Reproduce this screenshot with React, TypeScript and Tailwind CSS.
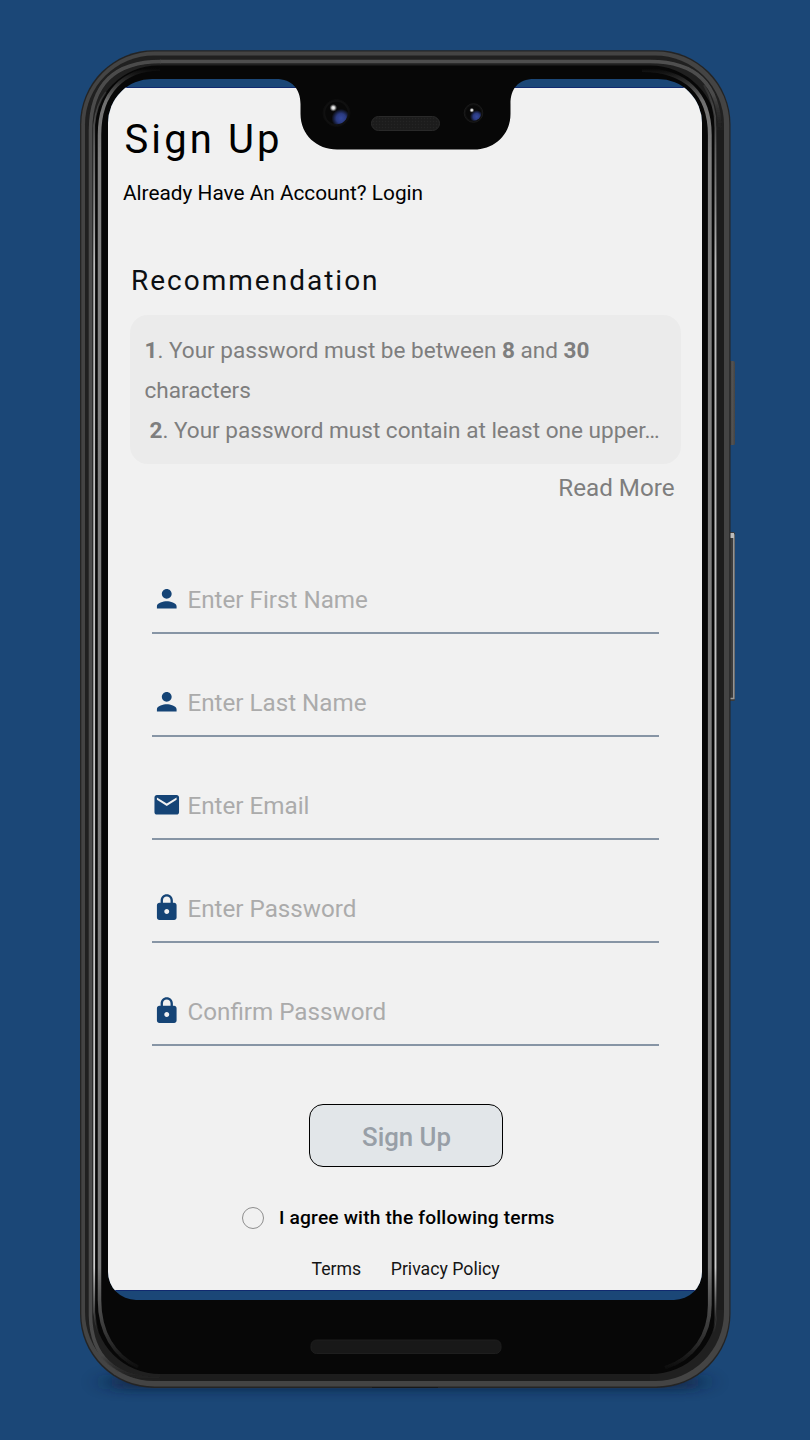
import type { ReactNode } from "react";
import { MdEmail, MdLock, MdPerson } from "react-icons/md";

const fields: { label: string; icon: ReactNode }[] = [
  { label: "Enter First Name", icon: <MdPerson size={29.5} /> },
  { label: "Enter Last Name", icon: <MdPerson size={29.5} /> },
  { label: "Enter Email", icon: <MdEmail size={29.5} /> },
  { label: "Enter Password", icon: <MdLock size={29.5} /> },
  { label: "Confirm Password", icon: <MdLock size={29.5} /> },
];

function PhoneBody() {
  return (
    <svg className="absolute inset-0" width="810" height="1440" viewBox="0 0 810 1440" aria-hidden="true">
      <defs>
        <filter id="shadow" x="-10%" y="-200%" width="120%" height="500%">
          <feGaussianBlur stdDeviation="14 6" />
        </filter>
        <filter id="soft" x="-5%" y="-5%" width="110%" height="110%">
          <feGaussianBlur stdDeviation="0.5" />
        </filter>
        <linearGradient id="button" x1="0" x2="1" y1="0" y2="0">
          <stop offset="0" stopColor="#222" />
          <stop offset="0.5" stopColor="#555" />
          <stop offset="1" stopColor="#444" />
        </linearGradient>
        <linearGradient id="fade" gradientUnits="userSpaceOnUse" x1="0" x2="0" y1="68" y2="1372">
          <stop offset="0" stopColor="#777" stopOpacity="0" />
          <stop offset="0.025" stopColor="#888" stopOpacity="0.8" />
          <stop offset="0.07" stopColor="#808080" />
          <stop offset="0.92" stopColor="#777" />
          <stop offset="0.97" stopColor="#555" stopOpacity="0.6" />
          <stop offset="1" stopColor="#555" stopOpacity="0" />
        </linearGradient>
        <linearGradient id="bright" gradientUnits="userSpaceOnUse" x1="0" x2="0" y1="68" y2="1372">
          <stop offset="0" stopColor="#999" stopOpacity="0" />
          <stop offset="0.06" stopColor="#999" stopOpacity="0.6" />
          <stop offset="0.15" stopColor="#bbb" />
          <stop offset="0.92" stopColor="#ccc" />
          <stop offset="0.97" stopColor="#aaa" stopOpacity="0" />
        </linearGradient>
        <linearGradient id="topRim" gradientUnits="userSpaceOnUse" x1="0" x2="0" y1="60" y2="130">
          <stop offset="0" stopColor="#505050" />
          <stop offset="0.5" stopColor="#4a4a4a" />
          <stop offset="1" stopColor="#2a2a2a" stopOpacity="0" />
        </linearGradient>
        <linearGradient id="leftRim" gradientUnits="userSpaceOnUse" x1="0" x2="0" y1="1320" y2="1380">
          <stop offset="0" stopColor="#4c4c4c" />
          <stop offset="0.6" stopColor="#444" />
          <stop offset="1" stopColor="#2a2a2a" stopOpacity="0" />
        </linearGradient>
      </defs>
      <rect x="110" y="1375" width="590" height="14" rx="7" fill="#071d38" opacity="0.75" filter="url(#shadow)" />
      <rect x="729" y="361" width="6" height="84" rx="1.5" fill="url(#button)" />
      <rect x="729" y="532" width="6" height="169" rx="1.5" fill="#3b3b3b" />
      <path d="M730 535H733.8V698.5H730" fill="none" stroke="#999" strokeWidth="1.5" />
      <rect x="730" y="533" width="4" height="5" fill="#bbb" />
      <rect x="80" y="50.2" width="650.5" height="1337.8" rx="74" fill="#242424" />
      <rect x="81.3" y="51.5" width="648" height="1335" rx="73" fill="#444" />
      <rect x="85" y="55.5" width="639" height="1325.5" rx="69" fill="#202020" />
      <path
        d="M160 61.5H650Q719 61.5 720 130"
        fill="none" stroke="url(#topRim)" strokeWidth="3.5" filter="url(#soft)"
      />
      <path
        d="M161 61.5Q91 61.5 90.5 130V1316Q92 1378 160 1379"
        fill="none" stroke="url(#leftRim)" strokeWidth="3.5" filter="url(#soft)"
      />
      <rect x="160" y="1374" width="490" height="7" fill="#1d1d1d" />
      <path d="M94 1310V130A64 64 0 0 1 158 65.5H650A67 67 0 0 1 717 132V1308A66 66 0 0 1 651 1374H160A66 66 0 0 1 94 1308Z" fill="#070707" />
      <rect x="717" y="130" width="7" height="1180" fill="#1c1c1c" />
      <path d="M106 92Q96 105 94.2 125V1312Q96 1335 108 1350" fill="none" stroke="url(#bright)" strokeWidth="1.8" />
      <path
        d="M160 69C124 69 99.5 92 99.5 135V1300C99.5 1332 114 1356 138 1367"
        fill="none" stroke="url(#fade)" strokeWidth="3.5" filter="url(#soft)"
      />
      <path
        d="M642 70C686 70 709.8 94 709.8 135V1305C709.8 1335 694 1358 665 1368"
        fill="none" stroke="url(#fade)" strokeWidth="3.8" filter="url(#soft)"
      />
      <path d="M704 85C712 98 715.5 112 715.5 128V1318C715 1334 710 1345 702 1354" fill="none" stroke="url(#bright)" strokeWidth="2" />
      <rect x="311" y="1340" width="190" height="13.5" rx="5.5" fill="#181818" stroke="#1e1e1e" />
      <path d="M372 1387.5H438" stroke="#181818" strokeWidth="1" />
    </svg>
  );
}

function Notch() {
  return (
    <svg className="absolute top-0 left-[160px]" width="274" height="72" viewBox="268 79 274 72" aria-hidden="true">
      <defs>
        <pattern id="mesh" width="3" height="3" patternUnits="userSpaceOnUse">
          <rect width="3" height="3" fill="#1c1c1c" />
          <circle cx="1.5" cy="1.5" r="0.7" fill="#242424" />
        </pattern>
        <radialGradient id="lens" cx="0.7" cy="0.74" r="0.42">
          <stop offset="0" stopColor="#34489c" />
          <stop offset="0.5" stopColor="#2a3a80" />
          <stop offset="1" stopColor="#080808" />
        </radialGradient>
        <radialGradient id="glint">
          <stop offset="0" stopColor="#fff" />
          <stop offset="0.4" stopColor="#ccc" />
          <stop offset="1" stopColor="#777" stopOpacity="0" />
        </radialGradient>
      </defs>
      <path
        d="M268 79H276C292 79 300.5 89 300.5 104V114C300.5 135 317 149.5 337 149.5H474C494 149.5 510.5 135 510.5 114V104C510.5 89 518 79 534 79H542Z"
        fill="#070707"
      />
      <circle cx="336.5" cy="113" r="13.5" fill="#101010" stroke="#0d0d0d" />
      <circle cx="336.5" cy="113" r="11.3" fill="url(#lens)" />
      <circle cx="333.3" cy="107.8" r="3.9" fill="url(#glint)" />
      <circle cx="473.5" cy="113" r="9.3" fill="#101010" stroke="#1a1a1a" />
      <circle cx="473.5" cy="113" r="7.8" fill="url(#lens)" />
      <circle cx="471.8" cy="110.2" r="2.5" fill="url(#glint)" />
      <rect x="371.5" y="116.5" width="68" height="14" rx="7" fill="url(#mesh)" stroke="#292929" />
    </svg>
  );
}

export default function App() {
  return (
    <div className="relative h-[1440px] w-[810px] overflow-hidden bg-[#1b4777] pt-[79px] pl-[108px] font-[Roboto,sans-serif] text-black">
      <PhoneBody />
      <div className="relative h-[1220.5px] w-[594px] overflow-hidden rounded-t-[44px] rounded-b-[28px] bg-[#1b4777] pt-[8px]">
        <main className="flex h-[1204px] flex-col border-y border-[#112a70] bg-[#f1f1f1]">
          <h1 className="mt-[28px] ml-[16.5px] text-[40px] leading-[48px] tracking-[3.1px]">Sign Up</h1>
          <p className="mt-[16px] ml-[15px] text-[20.8px] leading-[26px]">Already Have An Account? Login</p>

          <h2 className="mt-[58px] ml-[23px] text-[28px] leading-[34px] tracking-[2px] text-[#0c0f12]">Recommendation</h2>
          <section className="mt-[17px] ml-[22px] h-[149px] w-[551px] rounded-[18px] bg-[#ebebeb] px-[14.5px] pt-[16px] text-[22.55px] leading-[40px] whitespace-nowrap text-[#7e7e7e]">
            <p>
              <b>1</b>. Your password must be between <b>8</b> and <b>30</b>
            </p>
            <p>characters</p>
            <p className="pl-[5px]">
              <b>2</b>. Your password must contain at least one upper…
            </p>
          </section>
          <button className="mt-[9px] mr-[27.5px] self-end text-[24.2px] leading-[30px] text-[#7e7e7e]">Read More</button>

          <form className="mt-[28px] ml-[44px] flex w-[507px] flex-col">
            {fields.map((f) => (
              <label key={f.label} className="flex h-[103px] items-end gap-[6px] border-b-2 border-[#8795a5] pb-[17px]">
                <span className="flex h-[32px] items-center text-[#154476]">{f.icon}</span>
                <span className="text-[24.2px] leading-[30px] text-[#ababab]">{f.label}</span>
              </label>
            ))}
          </form>

          <button className="mt-[58px] ml-[201px] h-[63px] w-[194px] rounded-[14px] border-[1.5px] border-black bg-[#e2e6e9] pt-[3px] pl-[1px] text-[25.8px] font-medium text-[#989fa7]">
            Sign Up
          </button>
          <div className="mt-[38px] ml-[134px] flex h-[26px] items-center gap-[15px]">
            <span className="size-[22px] rounded-full border-[1.5px] border-[#8e8e8e]" />
            <span className="text-[19.2px] leading-[26px] font-medium tracking-[0.17px]">I agree with the following terms</span>
          </div>
          <nav className="mt-[26px] ml-[203.5px] flex gap-[29.5px] text-[17.7px] leading-[24px] text-[#151515]">
            <span>Terms</span>
            <span>Privacy Policy</span>
          </nav>
        </main>
        <Notch />
      </div>
    </div>
  );
}
